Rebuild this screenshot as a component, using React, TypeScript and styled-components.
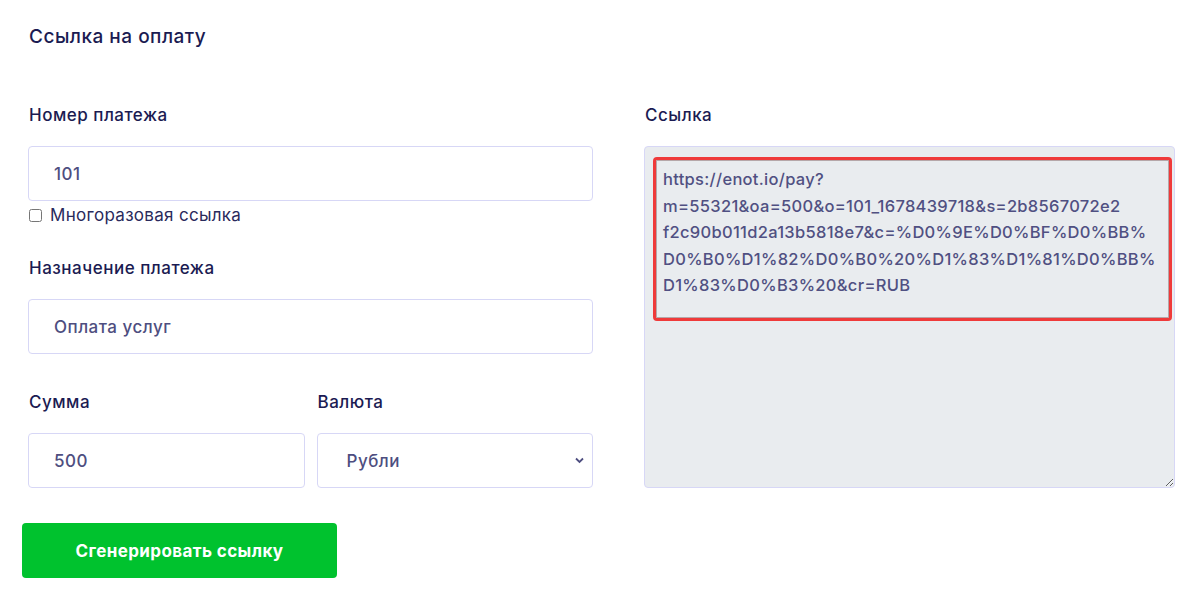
import React from 'react';
import styled, { createGlobalStyle } from 'styled-components';

const GlobalStyle = createGlobalStyle`
    body {
        margin: 0;
        background: #fff;
        font-family: Inter, "Noto Sans", Arial, sans-serif;
    }
`;

const Page = styled.div`
    padding: 27px 28px 0 28px;
`;

const Title = styled.h2`
    margin: 0 0 0 1px;
    font-size: 19px;
    line-height: 20px;
    letter-spacing: 0.5px;
    font-weight: 500;
    color: #1b1b52;
`;

const Columns = styled.div`
    display: grid;
    grid-template-columns: 565px 531px;
    column-gap: 51px;
    margin-top: 58px;
`;

const Column = styled.div`
    display: flex;
    flex-direction: column;
`;

const Label = styled.label`
    display: block;
    margin: 0 0 21px 1px;
    font-size: 17px;
    line-height: 20px;
    letter-spacing: 0.5px;
    font-weight: 500;
    color: #1b1b52;
`;

const Field = styled.div<{ $gap?: number }>`
    margin-top: ${(p) => p.$gap ?? 0}px;
`;

const Input = styled.input`
    box-sizing: border-box;
    width: 100%;
    height: 55px;
    padding: 0 25px;
    border: 1px solid #d7d7f6;
    border-radius: 4px;
    background: #fff;
    font-family: inherit;
    font-size: 17px;
    letter-spacing: 0.5px;
    font-weight: 500;
    color: #4e4e80;
    outline: none;
`;

const CheckRow = styled.label`
    display: flex;
    align-items: center;
    gap: 8px;
    height: 24px;
    margin-top: 2px;
    font-size: 17px;
    letter-spacing: 0.3px;
    color: #2a2a5c;
`;

const Check = styled.input`
    width: 13px;
    height: 13px;
    margin: 0 0 0 1px;
`;

const Row = styled.div`
    display: grid;
    grid-template-columns: 1fr 1fr;
    column-gap: 12px;
`;

const SelectWrap = styled.div`
    position: relative;
`;

const Select = styled.select`
    box-sizing: border-box;
    width: 100%;
    height: 55px;
    padding: 0 29px;
    border: 1px solid #d7d7f6;
    border-radius: 4px;
    background: #fff;
    font-family: inherit;
    font-size: 17px;
    letter-spacing: 0.5px;
    font-weight: 500;
    color: #4e4e80;
    appearance: none;
    outline: none;
`;

const Chevron = styled.svg`
    position: absolute;
    right: 9px;
    top: 24px;
    width: 9px;
    height: 7px;
    pointer-events: none;
`;

const Button = styled.button`
    align-self: flex-start;
    width: 315px;
    height: 55px;
    margin: 35px 0 0 -6px;
    border: 0;
    border-radius: 4px;
    background: #00c22e;
    font-family: inherit;
    font-size: 17px;
    letter-spacing: 0.4px;
    font-weight: 700;
    color: #fff;
    cursor: pointer;
`;

const LinkBox = styled.div`
    position: relative;
`;

const LinkArea = styled.textarea`
    box-sizing: border-box;
    display: block;
    width: 100%;
    height: 342px;
    padding: 19px 18px;
    border: 1px solid #d7d7f6;
    border-radius: 4px;
    background: #e9ecef;
    font-family: inherit;
    font-size: 16.5px;
    line-height: 26.5px;
    letter-spacing: 0.3px;
    font-weight: 500;
    color: #505082;
    white-space: pre;
    overflow: hidden;
    outline: none;
`;

const Highlight = styled.div`
    position: absolute;
    left: 9px;
    top: 11px;
    width: 519px;
    height: 164px;
    box-sizing: border-box;
    border: 3px solid #ef3a3a;
    border-radius: 4px;
    box-shadow: inset 0 0 0 1px rgba(90, 40, 40, 0.35);
    pointer-events: none;
`;

const link = [
    'https://enot.io/pay?',
    'm=55321&oa=500&o=101_1678439718&s=2b8567072e2',
    'f2c90b011d2a13b5818e7&c=%D0%9E%D0%BF%D0%BB%',
    'D0%B0%D1%82%D0%B0%20%D1%83%D1%81%D0%BB%',
    'D1%83%D0%B3%20&cr=RUB',
].join('\n');

const App = () => {
    return (
        <Page>
            <GlobalStyle />
            <Title>Ссылка на оплату</Title>
            <Columns>
                <Column>
                    <Field>
                        <Label>Номер платежа</Label>
                        <Input defaultValue="101" />
                        <CheckRow>
                            <Check type="checkbox" />
                            Многоразовая ссылка
                        </CheckRow>
                    </Field>
                    <Field $gap={31}>
                        <Label>Назначение платежа</Label>
                        <Input defaultValue="Оплата услуг" />
                    </Field>
                    <Field $gap={38}>
                        <Row>
                            <div>
                                <Label>Сумма</Label>
                                <Input defaultValue="500" />
                            </div>
                            <div>
                                <Label>Валюта</Label>
                                <SelectWrap>
                                    <Select defaultValue="RUB">
                                        <option value="RUB">Рубли</option>
                                        <option value="USD">Доллары</option>
                                    </Select>
                                    <Chevron viewBox="0 0 9 7">
                                        <path d="M1 1.5 L4.5 5 L8 1.5" fill="none" stroke="#4e4e80" strokeWidth="1.8" />
                                    </Chevron>
                                </SelectWrap>
                            </div>
                        </Row>
                    </Field>
                    <Button>Сгенерировать ссылку</Button>
                </Column>
                <Column>
                    <Label>Ссылка</Label>
                    <LinkBox>
                        <LinkArea readOnly value={link} />
                        <Highlight />
                    </LinkBox>
                </Column>
            </Columns>
        </Page>
    );
};

export default App;
